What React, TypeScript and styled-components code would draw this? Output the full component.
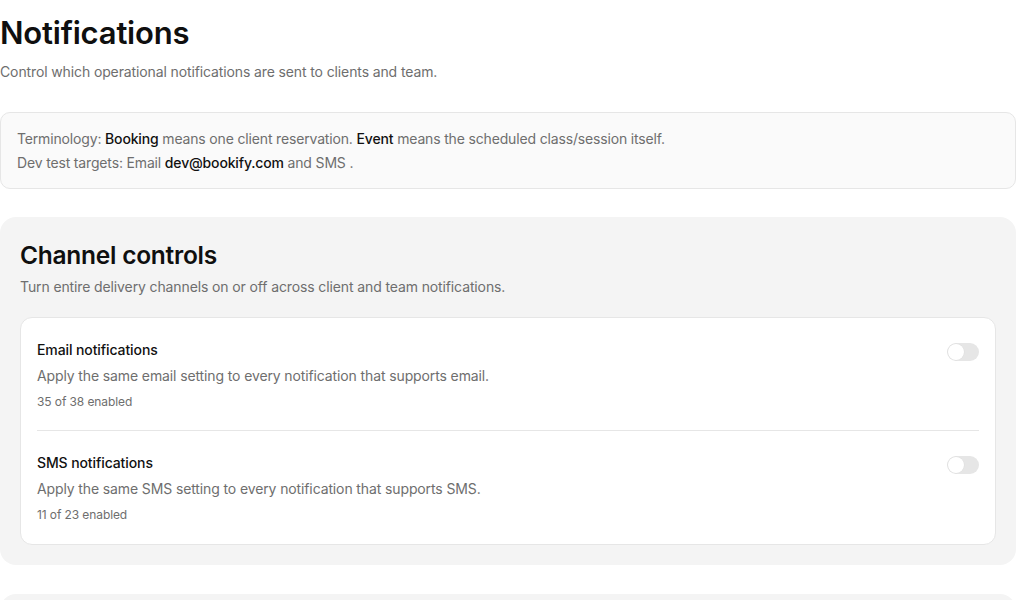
import styled, { createGlobalStyle } from "styled-components";

const GlobalStyle = createGlobalStyle`
  body {
    margin: 0;
    background: #ffffff;
    font-family: Inter, "Noto Sans", "Liberation Sans", sans-serif;
    color: #111111;
  }
`;

type Channel = {
  title: string;
  description: string;
  enabled: number;
  total: number;
  on: boolean;
};

const channels: Channel[] = [
  {
    title: "Email notifications",
    description: "Apply the same email setting to every notification that supports email.",
    enabled: 35,
    total: 38,
    on: false,
  },
  {
    title: "SMS notifications",
    description: "Apply the same SMS setting to every notification that supports SMS.",
    enabled: 11,
    total: 23,
    on: false,
  },
];

export default function App() {
  return (
    <>
      <GlobalStyle />
      <SPage>
        <SHeader>
          <STitle>Notifications</STitle>
          <SSubTitle>Control which operational notifications are sent to clients and team.</SSubTitle>
        </SHeader>

        <SInfoBox>
          <SInfoLine>
            Terminology: <SStrong>Booking</SStrong> means one client reservation.{" "}
            <SStrong>Event</SStrong> means the scheduled class/session itself.
          </SInfoLine>
          <SInfoLine>
            Dev test targets: Email <SStrong>dev@bookify.com</SStrong> and SMS .
          </SInfoLine>
        </SInfoBox>

        <SPanel>
          <SPanelTitle>Channel controls</SPanelTitle>
          <SPanelText>Turn entire delivery channels on or off across client and team notifications.</SPanelText>
          <SCard>
            {channels.map((c) => (
              <SRow key={c.title}>
                <SRowText>
                  <SRowTitle>{c.title}</SRowTitle>
                  <SRowDesc>{c.description}</SRowDesc>
                  <SRowCount>
                    {c.enabled} of {c.total} enabled
                  </SRowCount>
                </SRowText>
                <SToggle $on={c.on} role="switch" aria-checked={c.on}>
                  <SKnob $on={c.on} />
                </SToggle>
              </SRow>
            ))}
          </SCard>
        </SPanel>

        <SPanel>
          <SPanelTitle>Client notifications</SPanelTitle>
          <SPanelText>Messages sent to clients about their bookings.</SPanelText>
        </SPanel>
      </SPage>
    </>
  );
}

const SPage = styled.div`
  width: 1016px;
  padding-top: 15px;
`;

const SHeader = styled.div`
  display: flex;
  flex-direction: column;
  gap: 11px;
  margin-bottom: 30px;
`;

const STitle = styled.h1`
  margin: 0;
  font-size: 31px;
  line-height: 36px;
  font-weight: 600;
  letter-spacing: -0.2px;
  color: #0f0f0f;
`;

const SSubTitle = styled.p`
  margin: 0;
  font-size: 14px;
  line-height: 20px;
  letter-spacing: -0.12px;
  color: #6e6e6e;
`;

const SInfoBox = styled.div`
  border: 1px solid #e6e6e6;
  background: #fafafa;
  border-radius: 10px;
  padding: 14px 16px 13px;
  margin-bottom: 28px;
`;

const SInfoLine = styled.p`
  margin: 0;
  font-size: 14px;
  line-height: 24px;
  letter-spacing: -0.16px;
  color: #6e6e6e;
`;

const SStrong = styled.span`
  color: #111111;
  font-weight: 500;
`;

const SPanel = styled.section`
  background: #f4f4f4;
  border-radius: 16px;
  padding: 22px 20px 20px;
  margin-bottom: 29px;
`;

const SPanelTitle = styled.h2`
  margin: 0;
  font-size: 24.5px;
  line-height: 32px;
  font-weight: 600;
  letter-spacing: -0.25px;
  color: #0f0f0f;
`;

const SPanelText = styled.p`
  margin: 6px 0 0;
  font-size: 14px;
  line-height: 20px;
  letter-spacing: -0.12px;
  color: #6e6e6e;
`;

const SCard = styled.div`
  margin-top: 20px;
  background: #ffffff;
  border: 1px solid #e6e6e6;
  border-radius: 12px;
  padding: 0 16px 1px;
`;

const SRow = styled.div`
  display: flex;
  justify-content: space-between;
  align-items: flex-start;
  padding: 22px 0 19px;

  & + & {
    border-top: 1px solid #e6e6e6;
  }
`;

const SRowText = styled.div`
  display: flex;
  flex-direction: column;
`;

const SRowTitle = styled.div`
  font-size: 14px;
  line-height: 20px;
  font-weight: 500;
  letter-spacing: -0.1px;
  color: #111111;
`;

const SRowDesc = styled.div`
  margin-top: 6px;
  font-size: 14px;
  line-height: 20px;
  letter-spacing: -0.12px;
  color: #6e6e6e;
`;

const SRowCount = styled.div`
  margin-top: 7px;
  font-size: 12px;
  line-height: 18px;
  letter-spacing: -0.1px;
  color: #6e6e6e;
`;

const SToggle = styled.div<{ $on: boolean }>`
  position: relative;
  flex-shrink: 0;
  width: 32px;
  height: 18px;
  margin-top: 3px;
  border-radius: 9px;
  background: ${(p) => (p.$on ? "#111111" : "#e6e6e6")};
`;

const SKnob = styled.span<{ $on: boolean }>`
  position: absolute;
  top: 1px;
  left: ${(p) => (p.$on ? "15px" : "1px")};
  width: 16px;
  height: 16px;
  border-radius: 50%;
  background: #ffffff;
  box-shadow: 0 0 0 0.5px #dcdcdc;
`;
